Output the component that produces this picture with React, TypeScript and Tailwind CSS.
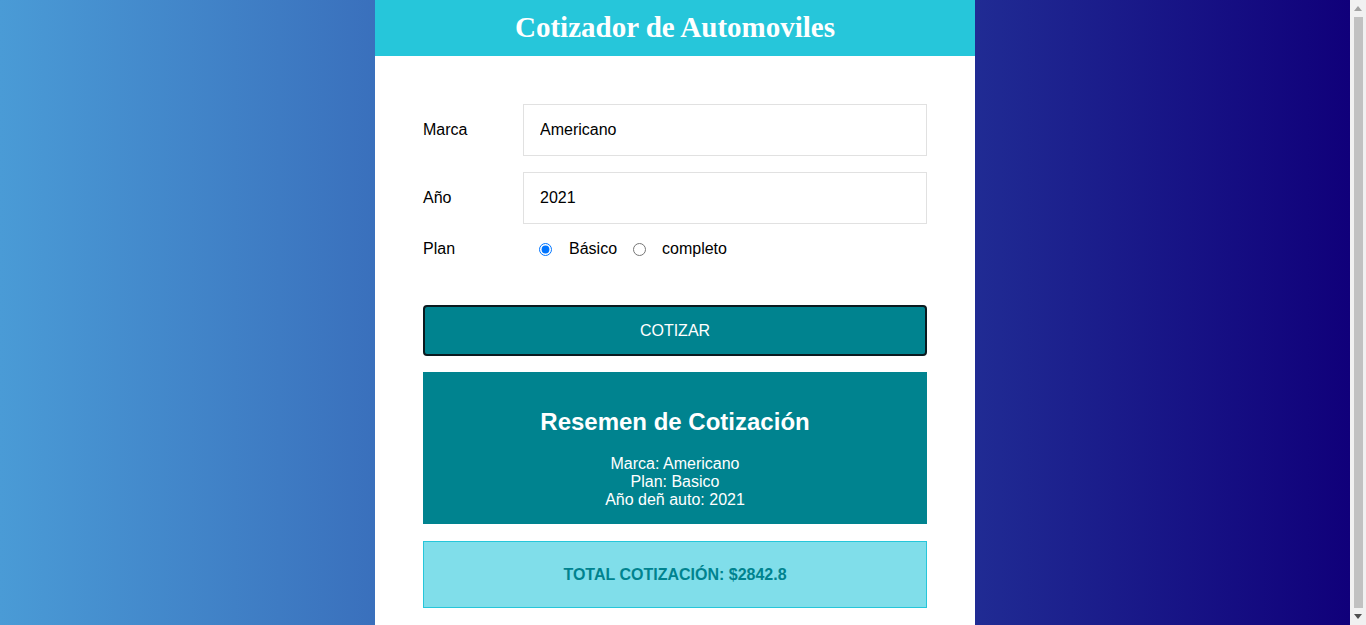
import { useState } from "react";

const FONT = { fontFamily: '"Liberation Sans", Arial, sans-serif' };

function Field({ label, value }: { label: string; value: string }) {
  return (
    <div className="mb-4 flex items-center">
      <label className="w-[100px] text-base text-black">{label}</label>
      <input
        readOnly
        value={value}
        className="h-[52px] flex-1 border border-[#e1e1e1] px-4 text-base text-black outline-none"
      />
    </div>
  );
}

/* Imitation of the browser's classic scrollbar seen in the capture */
function Scrollbar() {
  return (
    <aside className="sticky top-0 flex h-screen w-[16px] shrink-0 flex-col items-center bg-[#f1f1f1]">
      <div className="flex h-[17px] items-center justify-center">
        <svg width="8" height="5" viewBox="0 0 8 5">
          <path d="M4 0 L8 5 L0 5 Z" fill="#a3a3a3" />
        </svg>
      </div>
      <div className="w-[9px] flex-1 bg-[#c1c1c1]" />
      <div className="flex h-[17px] items-center justify-center">
        <svg width="8" height="5" viewBox="0 0 8 5">
          <path d="M0 0 L8 0 L4 5 Z" fill="#505050" />
        </svg>
      </div>
    </aside>
  );
}

export default function App() {
  const [plan, setPlan] = useState("basico");

  return (
    <div className="flex min-h-screen" style={FONT}>
      <main className="flex-1 bg-[linear-gradient(to_right,#4a9bd6,#10007a)]">
        <div className="mx-auto w-[600px] bg-white">
          {/* Header */}
          <header className="flex h-14 items-center justify-center bg-[#26c6da]">
            <h1
              className="text-[29px] font-bold text-white"
              style={{ fontFamily: '"Liberation Serif", "Times New Roman", serif' }}
            >
              Cotizador de Automoviles
            </h1>
          </header>

          {/* Form */}
          <div className="px-12 pb-8 pt-12">
            <Field label="Marca" value="Americano" />
            <Field label="Año" value="2021" />

            <div className="flex h-[18px] items-center">
              <label className="w-[100px] text-base text-black">Plan</label>
              <div className="flex items-center pl-4 text-base text-black">
                <input
                  type="radio"
                  name="plan"
                  checked={plan === "basico"}
                  onChange={() => setPlan("basico")}
                  className="m-0 h-[13px] w-[13px]"
                />
                <span className="ml-[17px]">Básico</span>
                <input
                  type="radio"
                  name="plan"
                  checked={plan === "completo"}
                  onChange={() => setPlan("completo")}
                  className="m-0 ml-4 h-[13px] w-[13px]"
                />
                <span className="ml-4">completo</span>
              </div>
            </div>

            <button className="mt-[47px] h-[51px] w-full rounded-[4px] border-2 border-[#0a1a1f] bg-[#00838f] text-base uppercase text-white">
              Cotizar
            </button>

            {/* Resumen */}
            <div className="mt-4 bg-[#00838f] pb-[15px] pt-[33px] text-center text-white">
              <h2 className="mb-4 text-2xl font-bold leading-[34px]">
                Resemen de Cotización
              </h2>
              <p className="text-base leading-[18px]">Marca: Americano</p>
              <p className="text-base leading-[18px]">Plan: Basico</p>
              <p className="text-base leading-[18px]">Año deñ auto: 2021</p>
            </div>

            {/* Total */}
            <div className="mt-[17px] border border-[#26c6da] bg-[#80deea] py-[23px] text-center">
              <p className="text-base font-bold leading-[19px] text-[#00838f]">
                TOTAL COTIZACIÓN: $2842.8
              </p>
            </div>
          </div>
        </div>
      </main>
      <Scrollbar />
    </div>
  );
}
